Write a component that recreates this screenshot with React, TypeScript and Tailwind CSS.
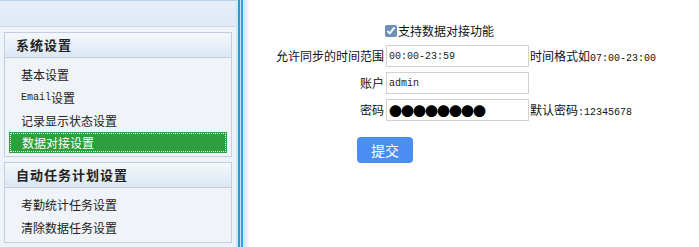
import React from "react";

const cjk = "font-['Noto_Sans_CJK_SC',sans-serif]";
const mono = "font-['Liberation_Mono','Noto_Sans_CJK_SC',monospace]";

type Item = { label: React.ReactNode; active?: boolean };

const groups: { title: string; items: Item[] }[] = [
  {
    title: "系统设置",
    items: [
      { label: "基本设置" },
      {
        label: (
          <>
            <span className={`${mono} text-[10px]`}>Email</span>设置
          </>
        ),
      },
      { label: "记录显示状态设置" },
      { label: "数据对接设置", active: true },
    ],
  },
  {
    title: "自动任务计划设置",
    items: [{ label: "考勤统计任务设置" }, { label: "清除数据任务设置" }],
  },
];

function SideGroup({ title, items }: { title: string; items: Item[] }) {
  return (
    <div className="mx-[4px] border border-[#c4cddf] bg-[#f0f4f8]">
      <div className="h-[25px] flex items-center pl-[11px] bg-gradient-to-b from-[#f5f8fc] to-[#dce7f3] border-b border-[#c4cddf] text-[13px] font-bold tracking-[1px] text-[#222]">
        {title}
      </div>
      <div className="pt-[5px] pb-[3px]">
        {items.map((it, i) =>
          it.active ? (
            <div key={i} className="mx-[4px] h-[21px] bg-[#2f9e3c] p-[1px]">
              <div className="h-full flex items-center pl-[11px] border border-dotted border-white text-white text-[12px]">
                {it.label}
              </div>
            </div>
          ) : (
            <div key={i} className="h-[23px] flex items-center pl-[16px] text-[12px] text-[#222]">
              {it.label}
            </div>
          )
        )}
      </div>
    </div>
  );
}

function Field({ label, children, note }: { label: string; children: React.ReactNode; note?: React.ReactNode }) {
  return (
    <>
      <div className="h-[22px] flex items-center justify-end text-[12px] text-[#111]">{label}</div>
      <div className="h-[22px] flex items-center">
        <div className="w-[143px] h-[22px] border border-[#d2d2d2] bg-white flex items-center pl-[2px]">{children}</div>
        {note && <div className="pl-[1px] text-[12px] text-[#111] whitespace-nowrap">{note}</div>}
      </div>
    </>
  );
}

export default function App() {
  return (
    <div className={`${cjk} w-[699px] h-[247px] flex bg-white overflow-hidden`}>
      <div className="w-[236px] h-full bg-[#eef3f9] flex flex-col">
        <div className="h-[27px] bg-gradient-to-b from-[#e6eff9] to-[#dfe9f5] border-t border-t-[#b9d3ea] border-b border-b-[#cad9e8]" />
        <div className="pt-[5px] flex flex-col gap-[5px]">
          {groups.map((g) => (
            <SideGroup key={g.title} title={g.title} items={g.items} />
          ))}
        </div>
      </div>
      <div className="w-[14px] h-full flex">
        <div className="w-[2px] bg-[#cfe6f4]" />
        <div className="w-[2px] bg-[#1f9ed9]" />
        <div className="w-[1px] bg-[#c6e6f6]" />
        <div className="w-[2px] bg-[#27a5dc]" />
        <div className="flex-1 bg-gradient-to-r from-[#bfe5f6] to-white" />
      </div>
      <div className="flex-1 pt-[22px]">
        <div className="grid grid-cols-[134px_auto] gap-x-[2px] gap-y-[5px] items-center">
          <div className="h-[18px]" />
          <label className="h-[18px] flex items-center text-[12px] text-[#111] -ml-[1px]">
            <input type="checkbox" defaultChecked className="w-[12px] h-[12px] m-0 mr-[1px] accent-[#6b8fb8]" />
            支持数据对接功能
          </label>
          <Field
            label="允许同步的时间范围"
            note={
              <>
                时间格式如<span className={`${mono} text-[10px]`}>07:00-23:00</span>
              </>
            }
          >
            <span className={`${mono} text-[10px] text-[#222]`}>00:00-23:59</span>
          </Field>
          <Field label="账户">
            <span className={`${mono} text-[10px] text-[#222]`}>admin</span>
          </Field>
          <Field
            label="密码"
            note={
              <>
                默认密码<span className={`${mono} text-[10px]`}>:12345678</span>
              </>
            }
          >
            <span className="text-[13px] leading-none tracking-[-1px] text-black">●●●●●●●●</span>
          </Field>
        </div>
        <button className="mt-[16px] ml-[107px] w-[56px] h-[26px] rounded-[4px] bg-[#4a8ef2] text-white text-[14px] flex items-center justify-center">
          提交
        </button>
      </div>
    </div>
  );
}
